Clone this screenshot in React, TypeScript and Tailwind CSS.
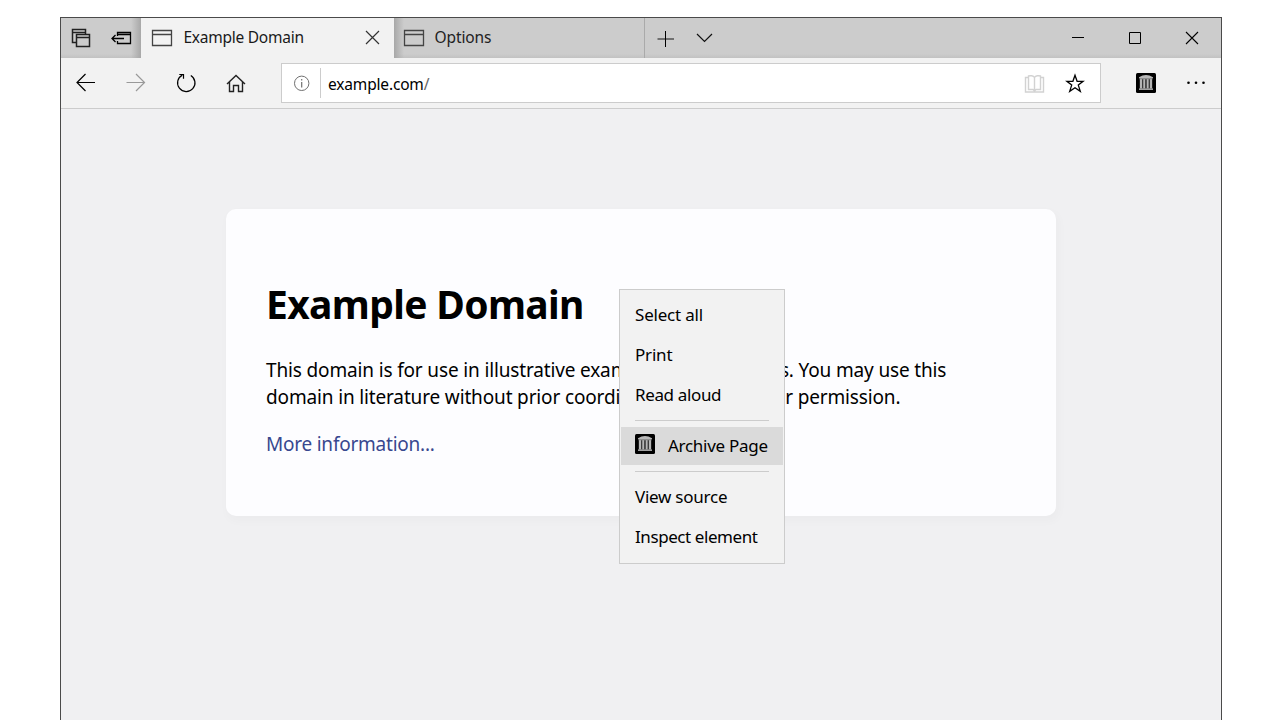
import type { ReactNode } from "react";

type IconProps = {
  box: string;
  w: number;
  h: number;
  className?: string;
  children: ReactNode;
};

function Icon({ box, w, h, className = "", children }: IconProps) {
  return (
    <svg
      viewBox={box}
      width={w}
      height={h}
      fill="none"
      stroke="currentColor"
      strokeWidth="1.2"
      className={`block shrink-0 ${className}`}
    >
      {children}
    </svg>
  );
}

function PageIcon({ className }: { className?: string }) {
  return (
    <Icon box="0 0 22 18" w={22} h={18} className={className}>
      <path d="M1.5 1.5h19v15h-19zM1.5 5.5h19" strokeWidth="1.3" />
    </Icon>
  );
}

function ArchiveIcon() {
  return (
    <Icon box="0 0 20 20" w={20} h={20}>
      <rect width="20" height="20" rx="1.5" fill="#000" stroke="none" />
      <g stroke="none">
        <path d="M3 4.2Q10 -0.2 17 4.2V5H3z" fill="#b8b8b8" />
        <rect x="3.5" y="5" width="13" height="11" fill="#3c3c3c" />
        <g fill="#b5b5b5">
          <rect x="4" y="6" width="2" height="9.5" />
          <rect x="7.3" y="6" width="1.8" height="9.5" />
          <rect x="10.8" y="6" width="1.8" height="9.5" />
          <rect x="14" y="6" width="2" height="9.5" />
        </g>
        <rect x="3.5" y="5" width="13" height="1.3" fill="#8d8d8d" />
        <rect x="3" y="15.4" width="14" height="1.6" fill="#a0a0a0" />
      </g>
    </Icon>
  );
}

function TabBar() {
  return (
    <div className="flex h-10 bg-[#cccccc] bg-[linear-gradient(to_top,#c2c2c2,transparent_4px)]">
      <div className="flex w-20 shrink-0 bg-[linear-gradient(to_right,transparent_70px,#a8a8a8_80px)]">
        <Icon box="61 18 40 40" w={40} h={40}>
          <path d="M76 42.5H72.5V29.5H85.5V34M72.5 32.5H85.5" stroke="#222" strokeWidth="1.5" />
          <path d="M76.5 34.5h13v12h-13zM76.5 37.5h13" stroke="#222" strokeWidth="1.5" />
        </Icon>
        <Icon box="101 18 40 40" w={40} h={40} className="text-black">
          <path d="M117.5 36V32.5H130.5V43.5H117.5V41M117.5 34.5H130.5" strokeWidth="1.3" />
          <path d="M112 38.5H124M115.5 35L112 38.5L115.5 42" strokeWidth="1.3" />
        </Icon>
      </div>
      <div className="flex w-[253px] shrink-0 items-center bg-[#f2f2f2] pl-[10px] pr-[14px]">
        <PageIcon className="-mt-px text-[#444]" />
        <span className="-mt-0.5 ml-[10.5px] text-[15.5px] leading-10 tracking-[-0.25px] text-[#1a1a1a]">
          Example Domain
        </span>
        <Icon box="0 0 15 15" w={15} h={15} className="-mt-px ml-auto text-[#333]">
          <path d="M1 1L14 14M14 1L1 14" />
        </Icon>
      </div>
      <div className="flex w-[251px] shrink-0 items-center border-r border-[#aaaaaa] bg-[linear-gradient(to_right,#a8a8a8,transparent_10px)] pl-[9px]">
        <PageIcon className="-mt-px text-[#444]" />
        <span className="-mt-0.5 ml-[9.5px] text-[15.5px] leading-10 tracking-[-0.1px] text-[#222]">
          Options
        </span>
      </div>
      <Icon box="645 18 40 40" w={40} h={40}>
        <path d="M657.5 39H674" stroke="#707070" strokeWidth="2" />
        <path d="M665.5 31V47" stroke="#000" strokeWidth="1" />
      </Icon>
      <Icon box="685 18 40 40" w={40} h={40} className="text-[#111]">
        <path d="M697 34L704.5 41.5L712 34" />
      </Icon>
      <div className="ml-auto flex text-black">
        <Icon box="1050 18 57 40" w={57} h={40}>
          <path d="M1072 37.5H1084" strokeWidth="1" />
        </Icon>
        <Icon box="1107 18 57 40" w={57} h={40}>
          <path d="M1129.5 32.5h11v11h-11z" strokeWidth="1" />
        </Icon>
        <Icon box="1164 18 57 40" w={57} h={40}>
          <path d="M1186 32L1198 44M1198 32L1186 44" strokeWidth="1.1" />
        </Icon>
      </div>
    </div>
  );
}

function Toolbar() {
  return (
    <div className="flex h-[51px] border-b border-[#cccccc] bg-[#f2f2f2] text-black">
      <Icon box="61 58 50 50" w={50} h={50}>
        <path d="M95 82.5H77M85.5 74L77 82.5L85.5 91" />
      </Icon>
      <Icon box="111 58 50 50" w={50} h={50} className="text-[#999]">
        <path d="M126.5 82.5H144.5M136 74L144.5 82.5L136 91" />
      </Icon>
      <Icon box="161 58 50 50" w={50} h={50}>
        <path d="M190.8 75.4A8.7 8.7 0 1 1 182.3 75.1" />
        <path d="M179.3 74.5H183.5V78.7" />
      </Icon>
      <Icon box="211 58 50 50" w={50} h={50}>
        <path
          d="M227 84L236 75.5L245 84M229.5 82V91.5H233.5V85.5H238.5V91.5H242.5V82"
          strokeWidth="1.4"
          stroke="#222"
        />
      </Icon>
      <div className="ml-5 mt-[5px] flex h-10 w-[820px] items-center border border-[#cccccc] bg-white">
        <Icon box="282 64 38 38" w={38} h={38} className="text-[#707070]">
          <circle cx="301.7" cy="83.3" r="7.2" strokeWidth="1" />
          <path d="M301.7 82V87.5M301.7 79V80.5" />
        </Icon>
        <div className="h-[30px] w-px bg-[#cccccc]" />
        <span className="ml-[7px] mt-[2px] text-[15.5px] leading-9 tracking-[-0.17px] text-black">
          example.com<span className="text-[#666]">/</span>
        </span>
        <div className="ml-auto flex pr-[5px]">
          <Icon box="1014 64 41 38" w={41} h={38} className="text-[#d2d2d2]">
            <path
              d="M1034.5 77.5V91M1034.5 77.5C1033.5 75.5 1030 75.5 1028.5 76V89.5H1033L1034.5 91L1036 89.5H1040.5V76C1039 75.5 1035.5 75.5 1034.5 77.5M1028.5 77.5H1025.5V92H1043.5V77.5H1040.5"
              strokeWidth="1.4"
            />
          </Icon>
          <Icon box="1055 64 40 38" w={40} h={38}>
            <path
              d="M1075 75.2L1077.1 81.3H1083.1L1078.3 85.1L1080.3 91.4L1075 87.7L1069.7 91.4L1071.7 85.1L1066.9 81.3H1072.9Z"
              strokeWidth="1.3"
            />
          </Icon>
        </div>
      </div>
      <div className="ml-[35px] mt-[15px]">
        <ArchiveIcon />
      </div>
      <Icon box="1171 58 50 50" w={50} h={50} className="ml-[15px]">
        <g fill="#000" stroke="none">
          <circle cx="1188.5" cy="82.8" r="1.3" />
          <circle cx="1196" cy="82.8" r="1.3" />
          <circle cx="1203.5" cy="82.8" r="1.3" />
        </g>
      </Icon>
    </div>
  );
}

function MenuItem({ className, children }: { className: string; children: ReactNode }) {
  return <li className={`flex h-10 items-center px-[15px] ${className}`}>{children}</li>;
}

function ContextMenu() {
  return (
    <ul className="absolute left-[558px] top-[180px] h-[275px] w-[166px] whitespace-nowrap border border-[#cccccc] bg-[#f2f2f2] pt-[5px] text-[17px] leading-10 text-black">
      <MenuItem className="tracking-[-0.2px]">Select all</MenuItem>
      <MenuItem className="tracking-[-0.2px]">Print</MenuItem>
      <MenuItem className="tracking-[-0.36px]">Read aloud</MenuItem>
      <li className="mx-[15px] mb-[6px] mt-[5px] h-px bg-[#cccccc]" />
      <li className="mx-px flex h-[38px] items-center bg-[#dadada] pl-[14px]">
        <div className="-mt-1">
          <ArchiveIcon />
        </div>
        <span className="ml-[13px] tracking-[-0.28px]">Archive Page</span>
      </li>
      <li className="mx-[15px] mb-[5px] mt-[6px] h-px bg-[#cccccc]" />
      <MenuItem className="tracking-[-0.25px]">View source</MenuItem>
      <MenuItem className="tracking-[-0.42px]">Inspect element</MenuItem>
    </ul>
  );
}

export default function App() {
  return (
    <div className="h-[720px] w-[1280px] overflow-hidden bg-white pl-[60px] pt-[17px] font-['Noto_Sans',sans-serif]">
      <div className="h-[720px] w-[1162px] border border-[#4a4a4a] bg-[#f0f0f2]">
        <TabBar />
        <Toolbar />
        <main className="relative pl-[165px] pt-[100px]">
          <article className="h-[307px] w-[830px] whitespace-nowrap rounded-[10px] bg-[#fdfdff] pl-10 pt-[68px] text-black shadow-[2px_4px_9px_2px_rgba(0,0,0,0.02)]">
            <h1 className="text-[39px] font-bold leading-[54px] tracking-[-0.65px]">Example Domain</h1>
            <p className="mt-[26px] text-[19px] leading-[27px]">
              <span className="block tracking-[-0.15px]">
                This domain is for use in illustrative examples in documents. You may use this
              </span>
              <span className="block tracking-[-0.15px]">
                domain in literature without prior coordination or asking for permission.
              </span>
            </p>
            <p className="mt-5 text-[19px] leading-[27px] tracking-[-0.23px]">
              <a className="text-[#38488f]">More information...</a>
            </p>
          </article>
          <ContextMenu />
        </main>
      </div>
    </div>
  );
}
